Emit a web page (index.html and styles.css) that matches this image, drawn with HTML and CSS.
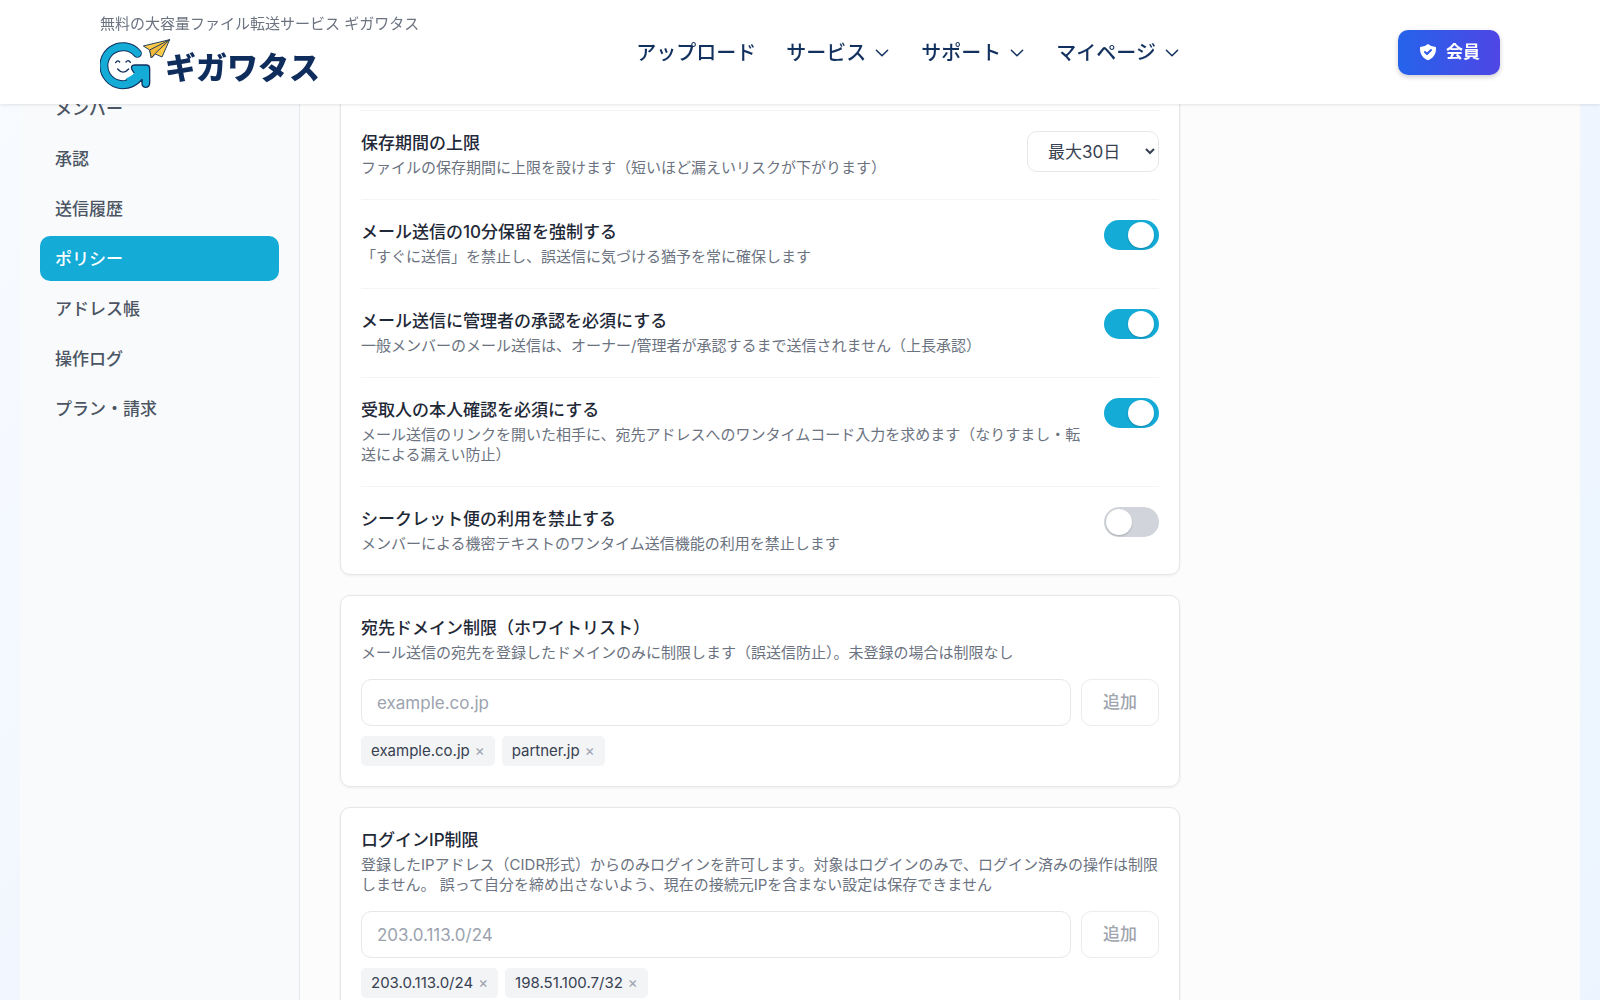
FILE: index.html
```html
<!DOCTYPE html>
<html lang="ja">
<head>
<meta charset="utf-8">
<meta name="viewport" content="width=device-width, initial-scale=1">
<title>ポリシー | ギガワタス</title>
<link rel="stylesheet" href="styles.css">
</head>
<body>
<div class="app">
  <header class="header">
    <div class="header-inner">
      <div class="brand">
        <p class="tagline">無料の大容量ファイル転送サービス ギガワタス</p>
        <a class="logo" href="#">
          <svg class="logo-mark" viewBox="30 114 213 156" aria-hidden="true">
            <path d="M142 160A57 57 0 1 0 124 248" fill="none" stroke="#12315f" stroke-width="27" stroke-linecap="round"/>
            <path d="M126 209Q120 196 134 195H168Q179 195 179 206V248Q179 262 166 262Q156 261 156 250V238Q142 256 118 263L108 240Q128 236 138 221Q130 218 126 209Z" fill="#14abd7" stroke="#12315f" stroke-width="4" stroke-linejoin="round"/>
            <path d="M142 160A57 57 0 1 0 124 248" fill="none" stroke="#14abd7" stroke-width="21" stroke-linecap="round"/>
            <path d="M112 243Q136 234 147 214" fill="none" stroke="#14abd7" stroke-width="18"/>
            <path d="M77 188Q82 178 89 186M108 186Q115 177 121 187M83 207Q99 226 116 207" fill="none" stroke="#12315f" stroke-width="4" stroke-linecap="round"/>
            <path d="M239 119L160 138L179 150L184 174L196 162L216 171Z" fill="#ffca45" stroke="#26405c" stroke-width="3" stroke-linejoin="round"/>
            <path d="M239 119L179 150L184 174L196 160Z" fill="#f3b93a" stroke="#26405c" stroke-width="3" stroke-linejoin="round"/>
          </svg>
          <span class="logo-text">ギガワタス</span>
        </a>
      </div>
      <nav class="nav" aria-label="メイン">
        <a class="nav-link" href="#">アップロード</a>
        <a class="nav-link" href="#">サービス<svg class="chevron" viewBox="0 0 24 24" aria-hidden="true"><path d="M19.500 8.250l-7.500 7.500-7.500-7.500"/></svg></a>
        <a class="nav-link" href="#">サポート<svg class="chevron" viewBox="0 0 24 24" aria-hidden="true"><path d="M19.500 8.250l-7.500 7.500-7.500-7.500"/></svg></a>
        <a class="nav-link" href="#">マイページ<svg class="chevron" viewBox="0 0 24 24" aria-hidden="true"><path d="M19.500 8.250l-7.500 7.500-7.500-7.500"/></svg></a>
      </nav>
      <button class="member" type="button">
        <svg class="shield" viewBox="0 0 20 20" aria-hidden="true"><path fill="#fff" fill-rule="evenodd" d="M2.166 4.999A11.954 11.954 0 0010 1.944 11.954 11.954 0 0017.834 5c.11.65.166 1.320.166 2.001 0 5.225-3.340 9.670-8 11.317C5.340 16.670 2 12.225 2 7c0-.682.057-1.350.166-2.001zm11.541 3.708a1 1 0 00-1.414-1.414L9 10.586 7.707 9.293a1 1 0 00-1.414 1.414l2 2a1 1 0 001.414 0l4-4z"/></svg>
        会員
      </button>
    </div>
  </header>

  <div class="workspace">
    <aside class="sidebar">
      <nav class="side-nav" aria-label="管理メニュー">
        <a class="side-link" href="#">メンバー</a>
        <a class="side-link" href="#">承認</a>
        <a class="side-link" href="#">送信履歴</a>
        <a class="side-link side-link--active" href="#" aria-current="page">ポリシー</a>
        <a class="side-link" href="#">アドレス帳</a>
        <a class="side-link" href="#">操作ログ</a>
        <a class="side-link" href="#">プラン・請求</a>
      </nav>
    </aside>

    <main class="content">
      <section class="card card--rows">
        <div class="row">
          <div class="row-text">
            <label class="title" for="retention">保存期間の上限</label>
            <p class="desc">ファイルの保存期間に上限を設けます（短いほど漏えいリスクが下がります）</p>
          </div>
          <select class="select" id="retention"><option>最大30日</option></select>
        </div>
        <div class="row">
          <div class="row-text">
            <label class="title" for="hold">メール送信の10分保留を強制する</label>
            <p class="desc">「すぐに送信」を禁止し、誤送信に気づける猶予を常に確保します</p>
          </div>
          <input class="toggle" id="hold" type="checkbox" role="switch" checked>
        </div>
        <div class="row">
          <div class="row-text">
            <label class="title" for="approval">メール送信に管理者の承認を必須にする</label>
            <p class="desc">一般メンバーのメール送信は、オーナー/管理者が承認するまで送信されません（上長承認）</p>
          </div>
          <input class="toggle" id="approval" type="checkbox" role="switch" checked>
        </div>
        <div class="row">
          <div class="row-text">
            <label class="title" for="verify">受取人の本人確認を必須にする</label>
            <p class="desc">メール送信のリンクを開いた相手に、宛先アドレスへのワンタイムコード入力を求めます（なりすまし・転送による漏えい防止）</p>
          </div>
          <input class="toggle" id="verify" type="checkbox" role="switch" checked>
        </div>
        <div class="row">
          <div class="row-text">
            <label class="title" for="secret">シークレット便の利用を禁止する</label>
            <p class="desc">メンバーによる機密テキストのワンタイム送信機能の利用を禁止します</p>
          </div>
          <input class="toggle" id="secret" type="checkbox" role="switch">
        </div>
      </section>

      <section class="card card--form">
        <label class="title" for="domain">宛先ドメイン制限（ホワイトリスト）</label>
        <p class="desc">メール送信の宛先を登録したドメインのみに制限します（誤送信防止）。未登録の場合は制限なし</p>
        <div class="add">
          <input class="field" id="domain" type="text" placeholder="example.co.jp">
          <button class="add-button" type="button" disabled>追加</button>
        </div>
        <ul class="chips">
          <li class="chip">example.co.jp<button class="remove" type="button" aria-label="example.co.jpを削除">×</button></li>
          <li class="chip">partner.jp<button class="remove" type="button" aria-label="partner.jpを削除">×</button></li>
        </ul>
      </section>

      <section class="card card--form">
        <label class="title" for="ip">ログインIP制限</label>
        <p class="desc">登録したIPアドレス（CIDR形式）からのみログインを許可します。対象はログインのみで、ログイン済みの操作は制限しません。 誤って自分を締め出さないよう、現在の接続元IPを含まない設定は保存できません</p>
        <div class="add">
          <input class="field" id="ip" type="text" placeholder="203.0.113.0/24">
          <button class="add-button" type="button" disabled>追加</button>
        </div>
        <ul class="chips">
          <li class="chip">203.0.113.0/24<button class="remove" type="button" aria-label="203.0.113.0/24を削除">×</button></li>
          <li class="chip">198.51.100.7/32<button class="remove" type="button" aria-label="198.51.100.7/32を削除">×</button></li>
        </ul>
      </section>
    </main>
  </div>
</div>
</body>
</html>
```
FILE: styles.css
```css
* {
  box-sizing: border-box;
}

body {
  margin: 0;
  font-family: Inter, "Noto Sans CJK JP", sans-serif;
  font-size: 17px;
  line-height: 25px;
  color: #1f2937;
}

p,
ul {
  margin: 0;
  padding: 0;
}

a {
  color: inherit;
  text-decoration: none;
}

button,
input,
select {
  font: inherit;
  margin: 0;
}

.app {
  height: 100vh;
  overflow: hidden;
  background: linear-gradient(135deg, #f8fbff, #f0f6ff 50%, #ecf5ff);
}

/* Header */

.header {
  position: sticky;
  top: 0;
  z-index: 10;
  background: #fff;
  box-shadow: 0 1px 3px rgba(0, 0, 0, 0.1);
}

.header-inner {
  display: flex;
  align-items: center;
  justify-content: space-between;
  max-width: 1440px;
  height: 104px;
  margin: 0 auto;
  padding: 0 20px;
}

.tagline {
  font-size: 15px;
  line-height: 20px;
  color: #6b7280;
}

.logo {
  display: flex;
  align-items: center;
  margin-top: 4px;
}

.logo-mark {
  width: 71px;
  height: 52px;
}

.logo-text {
  margin: 8px 0 0 -6px;
  font-size: 31px;
  line-height: 40px;
  font-weight: 900;
  color: #0f2d5c;
}

.nav {
  display: flex;
  gap: 30px;
  padding-top: 2px;
  font-size: 20px;
  line-height: 30px;
  font-weight: 500;
  color: #12315f;
}

.nav-link {
  display: flex;
  align-items: center;
  gap: 7px;
}

.chevron {
  width: 18px;
  height: 18px;
  fill: none;
  stroke: currentColor;
  stroke-width: 2;
  stroke-linecap: round;
  stroke-linejoin: round;
}

.member {
  display: flex;
  align-items: center;
  gap: 8px;
  height: 45px;
  padding: 0 20px;
  border: 0;
  border-radius: 10px;
  background: linear-gradient(to right, #2563eb, #4f46e5);
  box-shadow: 0 2px 5px rgba(0, 0, 0, 0.2);
  color: #fff;
  font-weight: 700;
}

.shield {
  width: 20px;
  height: 20px;
}

/* Workspace */

.workspace {
  display: flex;
  margin: -18px 20px 0;
  background: #fcfcfc;
}

.sidebar {
  flex: 0 0 280px;
  padding: 0 20px;
  border-right: 1px solid #e5e7eb;
  background: #f9fafc;
}

.side-nav {
  display: flex;
  flex-direction: column;
  gap: 5px;
}

.side-link {
  padding: 11px 15px 9px;
  border-radius: 10px;
  font-weight: 500;
  color: #4b5563;
}

.side-link--active {
  background: #14abd7;
  color: #fff;
}

.content {
  display: flex;
  flex: 1;
  flex-direction: column;
  gap: 20px;
  padding: 0 40px 40px;
}

.card {
  width: 100%;
  max-width: 840px;
  border: 1px solid #e5e7eb;
  border-radius: 10px;
  background: #fff;
  box-shadow: 0 1px 3px rgba(0, 0, 0, 0.06);
}

.card--rows {
  padding: 23px 20px 0;
}

.card--form {
  padding: 20px;
}

.row {
  display: flex;
  align-items: flex-start;
  justify-content: space-between;
  gap: 20px;
  padding: 20px 0 21px;
  border-top: 1px solid #f3f4f6;
}

.row:last-child {
  padding-bottom: 20px;
}

.title {
  display: block;
  font-weight: 500;
  color: #1f2937;
}

.desc {
  margin-top: 2px;
  font-size: 15px;
  line-height: 20px;
  color: #6b7280;
}

.select {
  flex: none;
  width: 132px;
  height: 41px;
  padding: 0 0 0 16px;
  border: 1px solid #e5e7eb;
  border-radius: 10px;
  background: #fff;
  color: #374151;
}

.toggle {
  flex: none;
  width: 55px;
  height: 30px;
  padding: 2px;
  border-radius: 15px;
  background: #d1d5db;
  appearance: none;
}

.toggle::before {
  content: "";
  display: block;
  width: 26px;
  height: 26px;
  border-radius: 50%;
  background: #fff;
  box-shadow: 0 1px 2px rgba(0, 0, 0, 0.2);
}

.toggle:checked {
  background: #14abd7;
}

.toggle:checked::before {
  margin-left: auto;
  margin-right: 3px;
}

.add {
  display: flex;
  gap: 10px;
  margin-top: 16px;
}

.field {
  flex: 1;
  min-width: 0;
  height: 47px;
  padding: 0 15px;
  border: 1px solid #e5e7eb;
  border-radius: 10px;
  background: #fff;
  color: #1f2937;
}

.field::placeholder {
  color: #9ca3af;
}

.add-button {
  width: 78px;
  border: 1px solid #ebecef;
  border-radius: 10px;
  background: #fff;
  font-weight: 500;
  color: #a0a5ae;
}

.chips {
  display: flex;
  flex-wrap: wrap;
  gap: 7px;
  margin-top: 10px;
  list-style: none;
}

.chip {
  display: flex;
  align-items: center;
  gap: 5px;
  height: 30px;
  padding: 0 10px;
  border-radius: 5px;
  background: #f3f4f6;
  font-size: 15px;
  line-height: 20px;
  color: #374151;
}

.remove {
  padding: 0;
  border: 0;
  background: none;
  color: #9ca3af;
}
```
